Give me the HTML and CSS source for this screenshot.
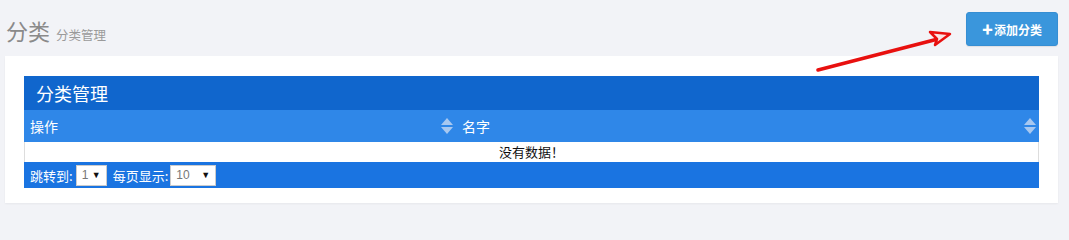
FILE: index.html
```html
<!DOCTYPE html>
<html lang="zh">
<head>
<meta charset="utf-8">
<link rel="stylesheet" href="styles.css">
</head>
<body>
<div class="page-header">
  <h1 class="title">分类 <small class="subtitle">分类管理</small></h1>
  <button class="add-btn"><span class="plus">✚</span>添加分类</button>
</div>
<svg class="arrow" width="150" height="50" viewBox="0 0 150 50">
  <path d="M2 42 L122 11" stroke="#e8100f" stroke-width="3.5" fill="none" stroke-linecap="round"/>
  <path d="M114 4 L134 6 L119 17 L121 11 Z" stroke="#e8100f" stroke-width="2.5" fill="#fbe3e3" stroke-linejoin="round"/>
</svg>
<div class="panel">
  <div class="grid">
    <div class="caption">分类管理</div>
    <div class="head">
      <div class="col col-op">操作<span class="sort"></span></div>
      <div class="col col-name">名字<span class="sort"></span></div>
    </div>
    <div class="empty">没有数据！</div>
    <div class="footer">
      <span>跳转到:</span>
      <span class="select sel-page">1<span class="caret">▼</span></span>
      <span class="gap">每页显示:</span>
      <span class="select sel-size">10<span class="caret">▼</span></span>
    </div>
  </div>
</div>
</body>
</html>
```

FILE: styles.css
```css
html, body {
  margin: 0;
  padding: 0;
}
body {
  background: #f2f3f7;
  font-family: "Noto Sans CJK SC", "Liberation Sans", sans-serif;
  width: 1069px;
  height: 222px;
  overflow: hidden;
  position: relative;
}
.page-header {
  display: flex;
  justify-content: space-between;
  align-items: flex-start;
  padding: 12px 11px 0 6px;
  height: 44px;
  box-sizing: border-box;
}
.title {
  margin: 5px 0 0 0;
  font-size: 22px;
  font-weight: normal;
  color: #8a8a8a;
  line-height: 26px;
}
.subtitle {
  font-size: 12.5px;
  color: #9a9a9a;
  margin-left: 1px;
}
.add-btn {
  width: 92px;
  height: 34px;
  background: #3a96dc;
  border: 1px solid #368ed3;
  border-radius: 3px;
  color: #fff;
  font-family: "Noto Sans CJK SC", sans-serif;
  font-size: 12px;
  font-weight: bold;
  padding: 0;
  display: flex;
  align-items: center;
  justify-content: center;
  box-shadow: 0 1px 1px rgba(0,0,0,0.08);
}
.plus {
  font-size: 11px;
  margin-right: 1px;
}
.arrow {
  position: absolute;
  left: 816px;
  top: 28px;
}
.panel {
  margin: 12px 11px 0 5px;
  background: #fff;
  padding: 20px 19px 15px 19px;
  box-shadow: 0 1px 2px rgba(0,0,0,0.05);
}
.grid {
  display: flex;
  flex-direction: column;
}
.caption {
  height: 34px;
  background: #1066cd;
  color: #fff;
  font-size: 18px;
  line-height: 34px;
  padding-left: 12px;
}
.head {
  height: 32px;
  background: #2f87e8;
  display: grid;
  grid-template-columns: 432px 1fr;
  color: #fff;
  font-size: 14px;
}
.col {
  display: flex;
  align-items: center;
  position: relative;
}
.col-op {
  padding-left: 6px;
}
.col-name {
  padding-left: 6px;
}
.sort {
  position: absolute;
  right: 3px;
  top: 8px;
  width: 12px;
  height: 16px;
}
.sort::before, .sort::after {
  content: "";
  position: absolute;
  left: 0;
  border-left: 6px solid transparent;
  border-right: 6px solid transparent;
}
.sort::before {
  top: 0;
  border-bottom: 7px solid #a8c8f0;
}
.sort::after {
  top: 9px;
  border-top: 7px solid #a8c8f0;
}
.empty {
  height: 20px;
  line-height: 20px;
  background: #fff;
  text-align: center;
  font-size: 13px;
  color: #111;
  border-left: 1px solid #ddd;
  border-right: 1px solid #ddd;
}
.footer {
  height: 26px;
  background: #1a74e1;
  display: flex;
  align-items: center;
  color: #fff;
  font-size: 13px;
  padding-left: 6px;
  gap: 2px;
}
.select {
  background: #fff;
  color: #777;
  height: 21px;
  font-family: "Liberation Sans", sans-serif;
  font-size: 12px;
  display: flex;
  align-items: center;
  padding-left: 5px;
  box-sizing: border-box;
  border: 1px solid #ccc;
  position: relative;
}
.caret {
  color: #111;
  font-size: 9px;
  position: absolute;
  right: 5px;
}
.sel-page {
  width: 31px;
  margin-left: 1px;
}
.sel-size {
  width: 46px;
  margin-left: 0;
}
.gap {
  margin-left: 4px;
}
```
